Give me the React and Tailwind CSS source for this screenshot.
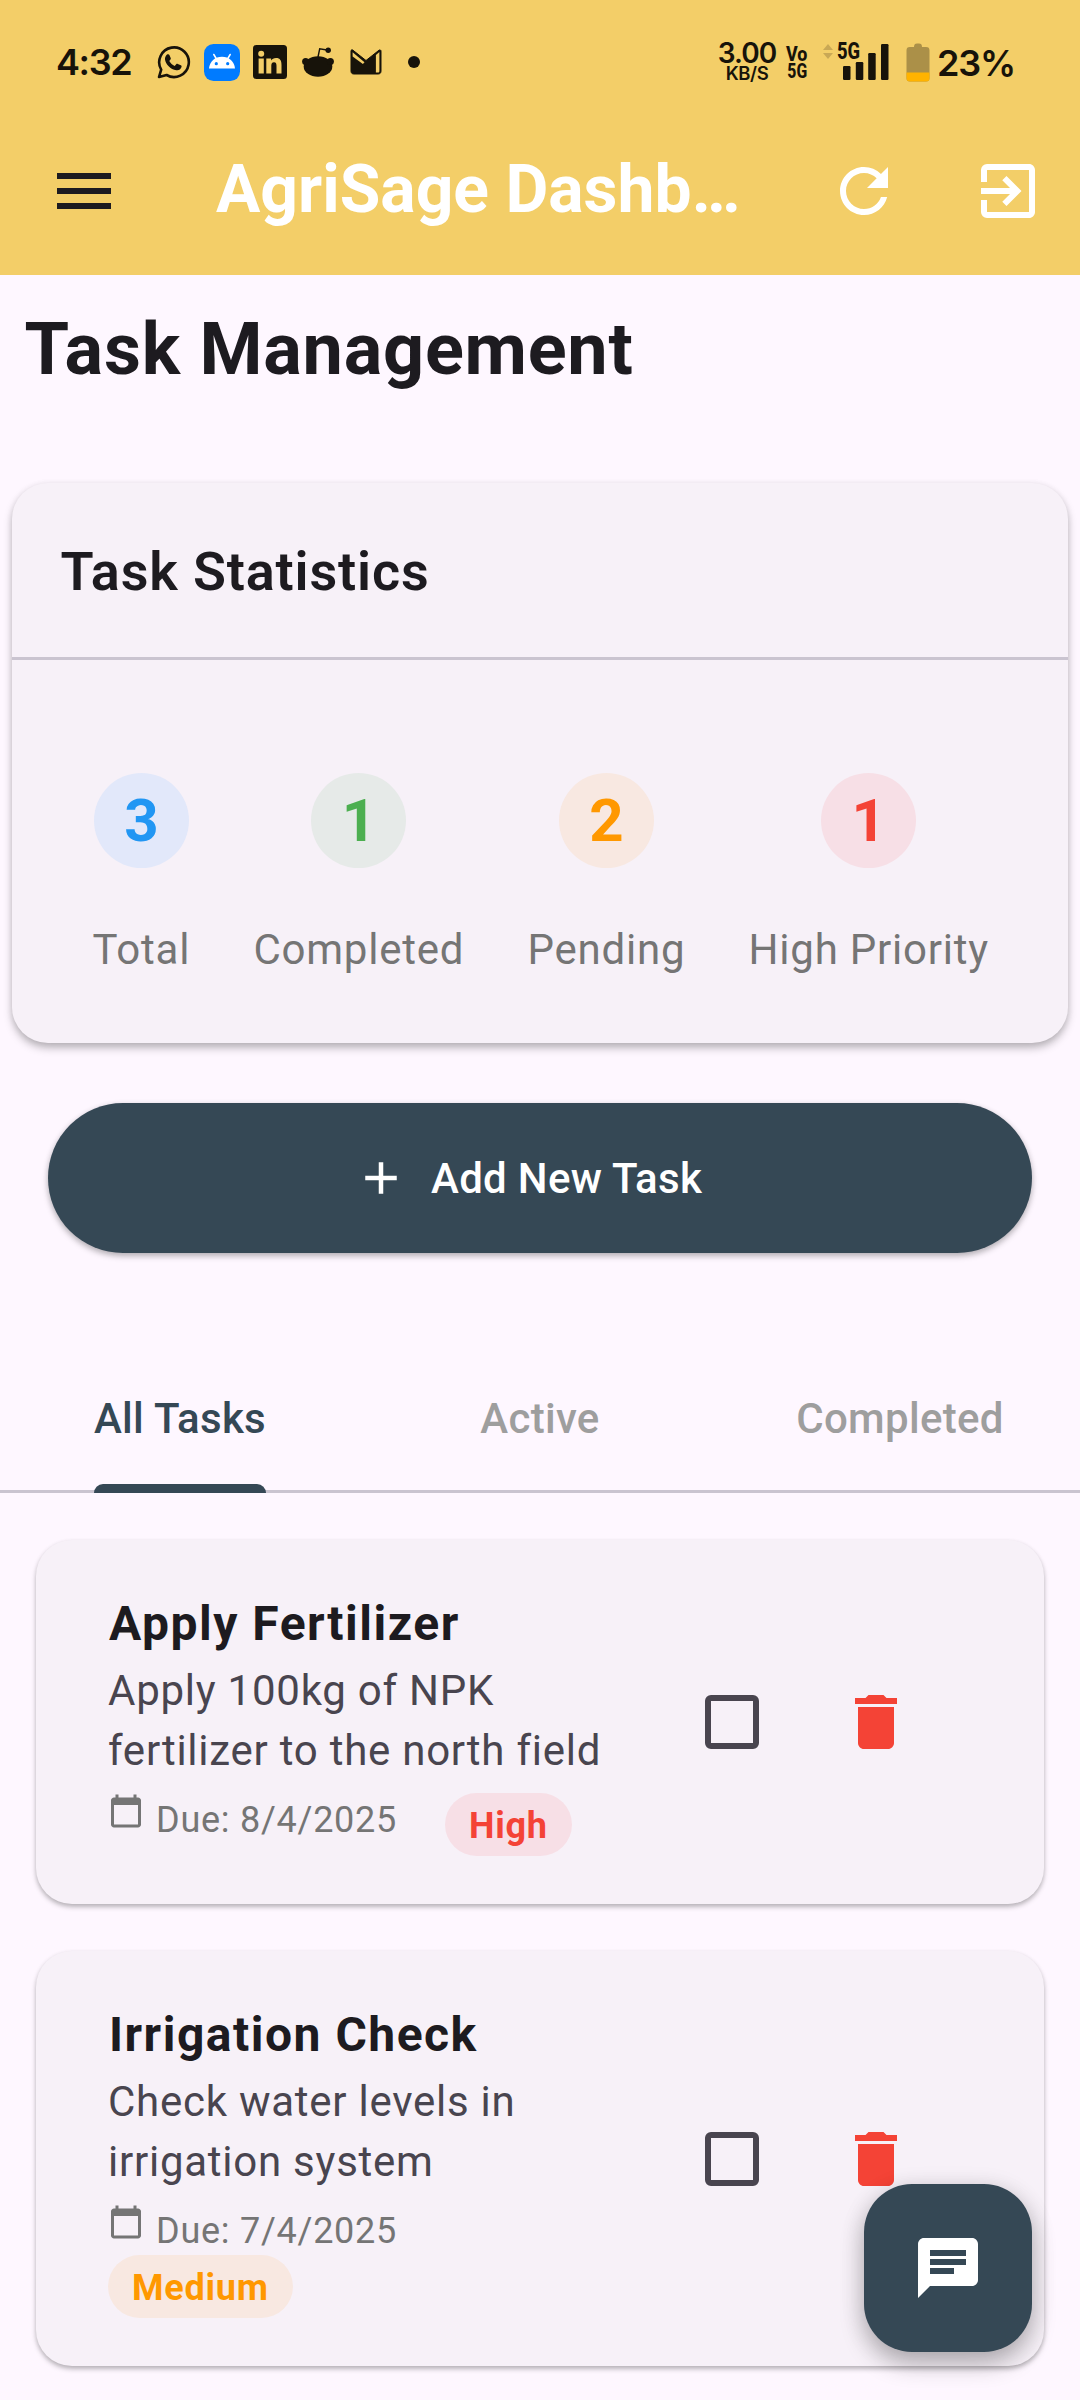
import React from 'react';
import {
  MdMenu,
  MdRefresh,
  MdExitToApp,
  MdAdd,
  MdDelete,
  MdChat,
  MdCalendarToday,
} from 'react-icons/md';

const INK = '#17130a';

const stats = [
  { value: '3', label: 'Total', text: 'text-[#2196f3]', bg: 'bg-[#e2e8fa]' },
  { value: '1', label: 'Completed', text: 'text-[#4caf50]', bg: 'bg-[#e6eae8]' },
  { value: '2', label: 'Pending', text: 'text-[#ff9800]', bg: 'bg-[#f8e8e1]' },
  { value: '1', label: 'High Priority', text: 'text-[#f44336]', bg: 'bg-[#f7dfe6]' },
];

const tasks = [
  {
    title: 'Apply Fertilizer',
    lines: ['Apply 100kg of NPK', 'fertilizer to the north field'],
    due: 'Due: 8/4/2025',
    priority: 'High',
    chip: 'bg-[#f7dfe6] text-[#f44336]',
  },
  {
    title: 'Irrigation Check',
    lines: ['Check water levels in', 'irrigation system'],
    due: 'Due: 7/4/2025',
    priority: 'Medium',
    chip: 'bg-[#f8e8e1] text-[#ff9800]',
  },
];

function WhatsAppIcon() {
  return (
    <svg viewBox="0 0 34 34" className="w-[34px] h-[34px] shrink-0">
      <path
        d="M2 32 4.2 24.6A14.8 14.8 0 1 1 9.6 30Z"
        fill="none"
        stroke={INK}
        strokeWidth="2.6"
        strokeLinejoin="round"
      />
      <path
        d="M10 9.6c.8-.7 2-.6 2.4.3l1.3 3c.3.7 0 1.300-.5 1.900l-.9 1.100c1.300 2.300 3 3.900 5.400 5l1.500-1.700c.4-.5 1-.6 1.600-.3l3 1.400c.8.4.9 1 .7 1.800-.6 2.300-2.900 3.600-5.100 3.200-6-1.200-10.800-6-11.400-10.900-.2-1.900.7-3.600 2-4.800Z"
        fill={INK}
      />
    </svg>
  );
}

function AndroidIcon() {
  return (
    <svg viewBox="0 0 36 37" className="w-[36px] h-[37px] shrink-0 ml-[13px]">
      <rect width="36" height="37" rx="9.500" fill="#007bff" />
      <path d="M5 24.500C5.600 17.500 11 12.800 18 12.800S30.400 17.500 31 24.500Z" fill="#fff" />
      <path d="M9.800 10.500 12.800 15.500M26.200 10.500 23.200 15.500" stroke="#fff" strokeWidth="1.500" strokeLinecap="round" />
      <circle cx="12.300" cy="19.700" r="1.600" fill="#007bff" />
      <circle cx="23.700" cy="19.700" r="1.600" fill="#007bff" />
    </svg>
  );
}

function LinkedInIcon() {
  return (
    <svg viewBox="0 0 34 34" className="w-[34px] h-[34px] shrink-0 ml-[13px]">
      <rect width="34" height="34" rx="3.500" fill={INK} />
      <g fill="#f3ce68">
        <circle cx="8.200" cy="8.800" r="3" />
        <path d="M5.600 13.500H10.800V28.500H5.600Z" />
        <path d="M13.300 13.500H18.100V15.600C19 14.100 20.800 13.100 23 13.100 27.200 13.100 28.500 15.800 28.500 20V28.500H23.500V20.900C23.500 18.900 23.100 17.300 21 17.300S18.300 19 18.300 20.800V28.500H13.300Z" />
      </g>
    </svg>
  );
}

function RedditIcon() {
  return (
    <svg viewBox="0 0 32 30" className="w-[32px] h-[30px] shrink-0 ml-[15px]">
      <ellipse cx="16" cy="19.500" rx="14.300" ry="10.300" fill={INK} />
      <circle cx="3.600" cy="14.600" r="3.500" fill={INK} />
      <circle cx="28.400" cy="14.600" r="3.500" fill={INK} />
      <path d="M16 10 17.700 1.800 25 3" fill="none" stroke={INK} strokeWidth="1.400" />
      <circle cx="26.200" cy="3.200" r="2.700" fill={INK} />
    </svg>
  );
}

function MailIcon() {
  return (
    <svg viewBox="0 0 32 26" className="w-[32px] h-[26px] shrink-0 ml-[16px]">
      <path d="M1 2C1 .8 2 .5 2.800 1.100L16 11.500 29 1.200C30 .5 31 1 31 2.200V22C31 24 30 25 28 25H4C2 25 1 24 1 22Z" fill={INK} stroke={INK} strokeWidth="1" strokeLinejoin="round" />
      <path d="M2.600 3.300 14.500 13.300 12.900 15 2.600 7.600Z" fill="#f3ce68" />
      <path d="M25.900 6 29.400 3.100V22C29.400 23 28.800 23.600 28 23.600H25.900Z" fill="#f3ce68" />
    </svg>
  );
}

function SignalIcon() {
  return (
    <svg viewBox="0 0 46 36" className="w-[46px] h-[36px]">
      <g fill={INK}>
        <rect x="0" y="22" width="7.500" height="14" rx="1.200" />
        <rect x="12.800" y="18" width="7.500" height="18" rx="1.200" />
        <rect x="25.200" y="9" width="7.500" height="27" rx="1.200" />
        <rect x="38" y="0" width="7.500" height="36" rx="1.200" />
      </g>
    </svg>
  );
}

function StatusBar() {
  return (
    <div className="h-[124px] flex items-center pl-[56px] text-[#17130a] font-['Inter',sans-serif]">
      <div className="w-[101px] text-[36px] leading-[44px] font-semibold tracking-[-1.4px]">4:32</div>
      <WhatsAppIcon />
      <AndroidIcon />
      <LinkedInIcon />
      <RedditIcon />
      <MailIcon />
      <span className="ml-[26px] w-[12px] h-[12px] rounded-full bg-[#17130a]" />

      <div className="ml-[297px] w-[60px] h-[38px] flex flex-col items-center font-semibold">
        <span className="text-[28px] leading-[21px] tracking-[-1px]">3.00</span>
        <span className="text-[18.500px] leading-[18px] tracking-[-0.400px]">KB/S</span>
      </div>
      <div className="ml-[8px] w-[24px] h-[34px] pt-px flex flex-col items-center font-['Roboto',sans-serif] font-extrabold text-[21px]">
        <span className="leading-[17px] scale-x-[0.85]">Vo</span>
        <span className="leading-[16px] scale-x-[0.75]">5G</span>
      </div>
      <svg viewBox="0 0 10 15" className="ml-[14px] mb-[22px] w-[10px] h-[15px]">
        <path d="M0 6 5 0 10 6ZM0 9 5 15 10 9Z" fill="#c9a855" />
      </svg>
      <div className="relative ml-[10px] w-[46px] h-[36px]">
        <SignalIcon />
        <span className="absolute left-[-6px] top-[-4px] font-['Roboto',sans-serif] font-extrabold text-[23px] leading-[24px] origin-left scale-x-[0.8]">
          5G
        </span>
      </div>
      <svg viewBox="0 0 24 39" className="ml-[17px] w-[24px] h-[39px]">
        <path d="M4 4H8C8 1.500 9 .5 11 .5H13C15 .5 16 1.500 16 4H20C22.500 4 23.500 5 23.500 7.500V35C23.500 37.500 22.500 38.500 20 38.500H4C1.500 38.500.5 37.500.5 35V7.500C.5 5 1.500 4 4 4Z" fill="#ab9048" />
        <path d="M.5 29.500H23.500V35C23.500 37.500 22.500 38.500 20 38.500H4C1.500 38.500.5 37.500.5 35Z" fill="#ffb300" />
      </svg>
      <span className="ml-[7px] mt-[2px] text-[36px] leading-[44px] font-semibold tracking-[-1.2px]">23%</span>
    </div>
  );
}

function TaskCard({ task }) {
  return (
    <article className="flex items-center px-[72px] py-[48px] rounded-[36px] bg-[#f7f1f8] shadow-[0_3px_5px_rgba(0,0,0,0.260),0_1px_4px_rgba(0,0,0,0.050)]">
      <div className="w-[500px]">
        <h3 className="pl-px text-[48px] leading-[72px] font-bold tracking-[1.500px] text-[#1d1b20]">{task.title}</h3>
        <p className="pt-px text-[42px] leading-[60px] tracking-[0.750px] text-[#49454f] whitespace-nowrap">
          {task.lines[0]}
          <br />
          {task.lines[1]}
        </p>
        <div className="mt-[12px] flex flex-wrap items-start gap-x-[48px]">
          <div className="flex h-[51px] gap-[12px] text-[#757575]">
            <MdCalendarToday className="w-[36px] h-[36px]" />
            <span className="pt-[2px] text-[36px] leading-[50px] tracking-[0.750px]">{task.due}</span>
          </div>
          <span
            className={`h-[63px] rounded-full px-[24px] pt-[4px] text-[36px] leading-[59px] font-bold tracking-[0.750px] ${task.chip}`}
          >
            {task.priority}
          </span>
        </div>
      </div>
      <span className="ml-[97px] w-[54px] h-[54px] rounded-[6px] border-[6px] border-[#49454f]" />
      <MdDelete className="ml-[81px] w-[72px] h-[72px] text-[#f44336]" />
    </article>
  );
}

export default function App() {
  return (
    <div className="relative w-[1080px] h-[2400px] overflow-hidden bg-[#fef7ff] font-['Roboto',sans-serif] text-[#1d1b20]">
      <header className="h-[275px] bg-[#f3ce68]">
        <StatusBar />
        <div className="h-[134px] flex items-center pl-[48px]">
          <MdMenu className="w-[72px] h-[72px] text-[#1d1b20]" />
          <h1 className="ml-[96px] w-[612px] pb-[3px] text-[66px] leading-[80px] font-bold text-white whitespace-nowrap">
            AgriSage Dashb…
          </h1>
          <MdRefresh className="w-[72px] h-[72px] text-white" />
          <MdExitToApp className="ml-[72px] w-[72px] h-[72px] text-white" />
        </div>
      </header>

      <h2 className="mt-[33px] ml-[24.500px] text-[72px] leading-[84px] font-bold tracking-[0.760px]">Task Management</h2>

      <section className="mt-[91px] mx-[12px] h-[560px] rounded-[36px] bg-[#f7f1f8] shadow-[0_5px_8px_rgba(0,0,0,0.260),0_1px_6px_rgba(0,0,0,0.070)]">
        <div className="h-[177px] border-b-[3px] border-[#cac4d0] pl-[48.500px] pt-[57px]">
          <h3 className="text-[54px] leading-[64px] font-semibold tracking-[0.850px]">Task Statistics</h3>
        </div>
        <div className="pt-[113px] pl-[80.500px] pr-[79px] flex justify-between">
          {stats.map((s) => (
            <div key={s.label} className="flex flex-col items-center">
              <div
                className={`w-[95px] h-[95px] rounded-full flex items-center justify-center text-[60px] leading-[95px] font-bold ${s.bg} ${s.text}`}
              >
                {s.value}
              </div>
              <span className="mt-[52px] text-[42px] leading-[60px] tracking-[0.780px] text-[#757575]">{s.label}</span>
            </div>
          ))}
        </div>
      </section>

      <button className="mt-[60px] mx-[48px] w-[984px] h-[150px] rounded-full bg-[#354855] text-white flex items-center pl-[306px] shadow-[0_3px_6px_rgba(0,0,0,0.280),0_1px_6px_rgba(0,0,0,0.050)]">
        <MdAdd className="w-[54px] h-[54px]" />
        <span className="ml-[23px] pt-[2px] text-[42px] leading-[60px] font-medium tracking-[0.300px]">Add New Task</span>
      </button>

      <nav className="mt-[93px] h-[147px] border-b-[3px] border-[#cac4d0] grid grid-cols-3 text-[42px] font-medium tracking-[0.300px] text-[#9e9e9e]">
        <div className="h-[147px] flex flex-col items-center justify-end text-[#354855]">
          <span className="leading-[60px]">All Tasks</span>
          <span className="mt-[35px] w-[172px] h-[9px] rounded-t-[9px] bg-[#354855]" />
        </div>
        <div className="h-[147px] flex flex-col items-center justify-end">
          <span className="leading-[60px] mb-[44px]">Active</span>
        </div>
        <div className="h-[147px] flex flex-col items-center justify-end">
          <span className="leading-[60px] mb-[44px]">Completed</span>
        </div>
      </nav>

      <main className="pt-[47px] px-[36px] flex flex-col gap-[47px]">
        {tasks.map((t) => (
          <TaskCard key={t.title} task={t} />
        ))}
      </main>

      <button className="absolute left-[864px] top-[2184px] w-[168px] h-[168px] rounded-[48px] bg-[#354855] text-white flex items-center justify-center shadow-[0_12px_24px_rgba(0,0,0,0.240),0_4px_24px_rgba(0,0,0,0.120)]">
        <MdChat className="w-[72px] h-[72px]" />
      </button>
    </div>
  );
}
